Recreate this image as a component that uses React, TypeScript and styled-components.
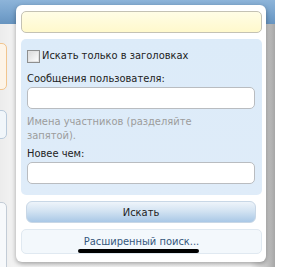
import React from "react";
import styled, { createGlobalStyle } from "styled-components";

const GlobalStyle = createGlobalStyle`
  html, body {
    margin: 0;
    padding: 0;
    background: #ffffff;
  }
  body {
    font-family: "DejaVu Sans Condensed", "DejaVu Sans", sans-serif;
    font-size: 11px;
    color: #222;
  }
`;

const App = () => {
  return (
    <>
      <GlobalStyle />
      <StyledPage>
        <StyledBackdrop>
          <StyledHeader />
          <StyledBody>
            <StyledSideBox $tone="orange" $top={19} $height={45} />
            <StyledSideBox $tone="blue" $top={20} $height={27} />
            <StyledSideBox $tone="gray" $top={63} $height={90} />
          </StyledBody>
        </StyledBackdrop>

        <StyledPopup>
          <StyledQuery type="text" />
          <StyledOptions>
            <StyledCheckRow>
              <StyledCheckbox />
              <span>Искать только в заголовках</span>
            </StyledCheckRow>
            <StyledLabel>Сообщения пользователя:</StyledLabel>
            <StyledInput type="text" />
            <StyledHint>Имена участников (разделяйте запятой).</StyledHint>
            <StyledLabel $gap={4}>Новее чем:</StyledLabel>
            <StyledInput type="text" />
          </StyledOptions>
          <StyledButton type="button">Искать</StyledButton>
          <StyledAdvanced>
            <StyledLink>Расширенный поиск...</StyledLink>
          </StyledAdvanced>
        </StyledPopup>
      </StyledPage>
    </>
  );
};

export default App;

const StyledPage = styled.div`
  position: relative;
  width: 289px;
  height: 267px;
  overflow: hidden;
`;

const StyledBackdrop = styled.div`
  width: 275px;
  height: 267px;
  display: flex;
  flex-direction: column;
`;

const StyledHeader = styled.div`
  height: 24px;
  flex: none;
  background: linear-gradient(to bottom, #8db4d9 0%, #76a2cc 60%, #6794c0 100%);
`;

const StyledBody = styled.div`
  flex: 1;
  display: flex;
  flex-direction: column;
  background: linear-gradient(
    to right,
    #ececec 0px,
    #f6f6f6 20px,
    #f8f8f8 250px,
    #c9c9c9 266px,
    #a6a6a6 275px
  );
`;

const toneColors = {
  orange: { border: "#f1c58f", fill: "#fdf4e8" },
  blue: { border: "#b9cadb", fill: "#f1f6fa" },
  gray: { border: "#c3ccd6", fill: "#f7f9fb" },
};

const StyledSideBox = styled.div<{
  $tone: keyof typeof toneColors;
  $top: number;
  $height: number;
}>`
  width: 10px;
  margin-left: -5px;
  margin-top: ${(p) => p.$top}px;
  height: ${(p) => p.$height}px;
  border: 1px solid ${(p) => toneColors[p.$tone].border};
  background: ${(p) => toneColors[p.$tone].fill};
  border-radius: 0 5px 5px 0;
`;

const StyledPopup = styled.div`
  position: absolute;
  left: 16px;
  top: 5px;
  width: 250px;
  height: 257px;
  box-sizing: border-box;
  padding: 6px 4px 7px 5px;
  display: flex;
  flex-direction: column;
  gap: 6px;
  background: #ffffff;
  border-radius: 6px;
  box-shadow: 0 2px 5px rgba(0, 0, 0, 0.35);
`;

const StyledQuery = styled.input`
  height: 22px;
  box-sizing: border-box;
  margin: 0;
  border: 1px solid #c4c2b4;
  border-radius: 5px;
  background: linear-gradient(to bottom, #fffde6 0%, #fff9cc 100%);
  outline: none;
`;

const StyledOptions = styled.div`
  padding: 10px 7px 11px 6px;
  border-radius: 5px;
  background: linear-gradient(to bottom, #dcebf9 0%, #dfecf9 100%);
  display: flex;
  flex-direction: column;
`;

const StyledCheckRow = styled.label`
  display: flex;
  align-items: center;
  gap: 2px;
  height: 14px;
  line-height: 14px;
  color: #222;
`;

const StyledCheckbox = styled.span`
  width: 11px;
  height: 11px;
  flex: none;
  border: 1px solid #8e8f8f;
  background: linear-gradient(135deg, #d8d8d8 0%, #f4f4f4 70%, #ffffff 100%);
  box-shadow: inset 0 0 0 1px #e2e2e2;
`;

const StyledLabel = styled.div<{ $gap?: number }>`
  margin-top: ${(p) => p.$gap ?? 9}px;
  margin-bottom: 1px;
  line-height: 14px;
  color: #222;
`;

const StyledInput = styled.input`
  height: 22px;
  box-sizing: border-box;
  margin: 0;
  border: 1px solid #b9bcc0;
  border-radius: 5px;
  background: #ffffff;
  outline: none;
`;

const StyledHint = styled.div`
  margin-top: 6px;
  max-width: 175px;
  line-height: 14px;
  color: #9c9c9c;
`;

const StyledButton = styled.button`
  height: 22px;
  margin: 0 6px 0 5px;
  padding: 0;
  border: 1px solid #c8d7e6;
  border-radius: 6px;
  background: linear-gradient(to bottom, #eef4fa 0%, #d3e3f2 45%, #a9c8e6 100%);
  font-family: inherit;
  font-size: 11px;
  color: #222;
`;

const StyledAdvanced = styled.div`
  height: 25px;
  box-sizing: border-box;
  border: 1px solid #e0e9f1;
  border-radius: 5px;
  background: #f3f8fc;
  display: flex;
  align-items: center;
  justify-content: center;
`;

const StyledLink = styled.span`
  position: relative;
  color: #35577c;
  line-height: 14px;
  margin-top: 1px;

  &::after {
    content: "";
    position: absolute;
    left: -6px;
    right: 0;
    bottom: -4px;
    height: 4px;
    border-radius: 2px;
    background: #000;
  }
`;
